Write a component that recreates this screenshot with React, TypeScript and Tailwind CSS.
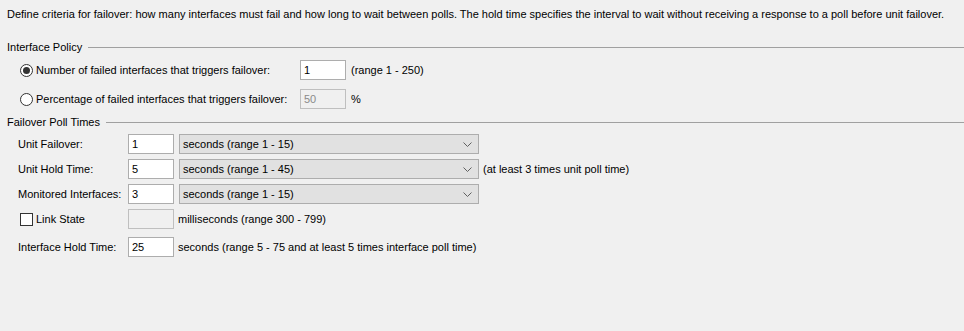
import React from 'react';

const Chevron = () => (
  <svg width="9" height="5" viewBox="0 0 9 5" className="shrink-0">
    <path d="M0.5 0.5 L4.5 4.5 L8.5 0.5" fill="none" stroke="#606060" strokeWidth="1" />
  </svg>
);

const Radio = ({ checked }: { checked?: boolean }) => (
  <span className="w-[13px] h-[13px] rounded-full border border-[#333333] bg-white flex items-center justify-center shrink-0">
    {checked && <span className="w-[7px] h-[7px] rounded-full bg-[#333333]" />}
  </span>
);

const TextBox = ({ value, disabled }: { value?: string; disabled?: boolean }) => (
  <div
    className={`w-[46px] h-[20px] border flex items-center pl-[3px] shrink-0 ${
      disabled ? 'bg-[#f0f0f0] border-[#bfbfbf] text-[#8a8a8a]' : 'bg-white border-[#adadad] text-black'
    }`}
  >
    {value}
  </div>
);

const Select = ({ label }: { label: string }) => (
  <div className="ml-[5px] w-[300px] h-[20px] bg-[#e1e1e1] border border-[#adadad] flex items-center justify-between pl-[3px] pr-[6px] shrink-0">
    <span>{label}</span>
    <Chevron />
  </div>
);

const Section = ({ title, className }: { title: string; className: string }) => (
  <div className={`flex items-center h-[16px] pl-[7px] ${className}`}>
    <span>{title}</span>
    <div className="flex-1 h-px bg-[#a0a0a0] ml-[6px]" />
  </div>
);

const PollRow = ({ label, value, unit, note, className }: { label: string; value: string; unit: string; note?: string; className: string }) => (
  <div className={`flex items-center h-[20px] pl-[18px] ${className}`}>
    <span className="w-[110px] shrink-0">{label}</span>
    <TextBox value={value} />
    <Select label={unit} />
    {note && <span className="ml-[4px]">{note}</span>}
  </div>
);

export default function App() {
  return (
    <div className="w-[964px] h-[331px] bg-[#f0f0f0] text-black text-[11px] pt-[6px] overflow-hidden" style={{ fontFamily: '"Liberation Sans", Arial, sans-serif' }}>
      <p className="h-[16px] leading-[16px] pl-[7px] whitespace-nowrap">
        Define criteria for failover: how many interfaces must fail and how long to wait between polls. The hold time specifies the interval to wait without receiving a response to a poll before unit failover.
      </p>

      <Section title="Interface Policy" className="mt-[17px]" />

      <div className="flex items-center h-[20px] mt-[5px] pl-[20px]">
        <Radio checked />
        <span className="w-[264px] ml-[3px] shrink-0">Number of failed interfaces that triggers failover:</span>
        <TextBox value="1" />
        <span className="ml-[5px]">(range 1 - 250)</span>
      </div>
      <div className="flex items-center h-[20px] mt-[9px] pl-[20px]">
        <Radio />
        <span className="w-[264px] ml-[3px] shrink-0">Percentage of failed interfaces that triggers failover:</span>
        <TextBox value="50" disabled />
        <span className="ml-[5px]">%</span>
      </div>

      <Section title="Failover Poll Times" className="mt-[5px]" />

      <PollRow label="Unit Failover:" value="1" unit="seconds (range 1 - 15)" className="mt-[4px]" />
      <PollRow label="Unit Hold Time:" value="5" unit="seconds (range 1 - 45)" note="(at least 3 times unit poll time)" className="mt-[5px]" />
      <PollRow label="Monitored Interfaces:" value="3" unit="seconds (range 1 - 15)" className="mt-[5px]" />

      <div className="flex items-center h-[20px] mt-[5px] pl-[20px]">
        <span className="w-[13px] h-[13px] border border-[#333333] bg-white shrink-0" />
        <span className="w-[92px] ml-[3px] shrink-0">Link State</span>
        <TextBox disabled />
        <span className="ml-[4px]">milliseconds (range 300 - 799)</span>
      </div>

      <div className="flex items-center h-[20px] mt-[8px] pl-[18px]">
        <span className="w-[110px] shrink-0">Interface Hold Time:</span>
        <TextBox value="25" />
        <span className="ml-[4px]">seconds (range 5 - 75 and at least 5 times interface poll time)</span>
      </div>
    </div>
  );
}
